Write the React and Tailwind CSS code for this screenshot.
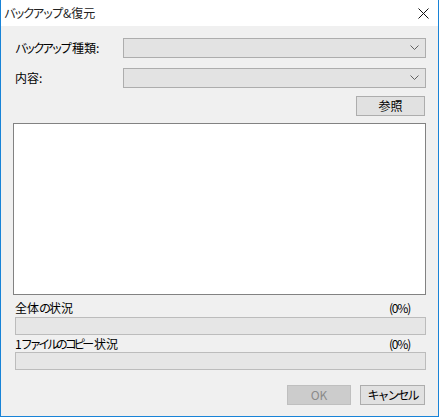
const font = { fontFamily: '"Noto Sans CJK JP", "Noto Sans", sans-serif' };

function Combo() {
    return (
        <div className="flex-1 h-[20px] bg-[#e3e3e3] border border-[#adadad] flex items-center justify-end pr-[6px]">
            <svg width="9" height="6" viewBox="0 0 9 6" className="text-[#606060]">
                <path d="M0.5 0.5 L4.5 4.5 L8.5 0.5" fill="none" stroke="currentColor" strokeWidth="1" />
            </svg>
        </div>
    );
}

function Progress() {
    return <div className="h-[18px] bg-[#e6e6e6] border border-[#bcbcbc]" />;
}

export default function App() {
    return (
        <div
            className="w-[439px] h-[417px] flex flex-col border-l border-r border-b border-[#1883d7] text-[12px] text-black"
            style={font}
        >
            {/* Title bar */}
            <div className="h-[26px] bg-white flex items-center justify-between pl-[3px] pr-[9px]">
                <span className="text-[12px] text-[#222] leading-none">
                    <span className="tracking-[-2.5px]">バックアップ</span>
                    <span className="pl-[2px]">&amp;復元</span>
                </span>
                <svg width="11" height="11" viewBox="0 0 11 11">
                    <path d="M0.5 0.5 L10.5 10.5 M10.5 0.5 L0.5 10.5" stroke="#111" strokeWidth="1" />
                </svg>
            </div>

            <div className="flex-1 bg-[#f0f0f0] flex flex-col pl-[12px] pr-[12px]">
                <div className="flex items-center mt-[12px]">
                    <span className="w-[110px] pl-[2px]">
                        <span className="tracking-[-3px]">バックアップ</span>
                        <span className="pl-[3px]">種類:</span>
                    </span>
                    <Combo />
                </div>
                <div className="flex items-center mt-[10px]">
                    <span className="w-[110px] pl-[2px]">内容:</span>
                    <Combo />
                </div>
                <div className="flex justify-end mt-[8px] pr-[1px]">
                    <button className="w-[69px] h-[20px] bg-[#e1e1e1] border border-[#adadad] leading-none">
                        参照
                    </button>
                </div>

                <div className="mt-[7px] h-[172px] bg-white border border-[#828282]" />

                <div className="mt-[4px] h-[18px] flex items-center justify-between pl-[2px] pr-[16px]">
                    <span>
                        全体<span className="tracking-[-2px]">の</span>状況
                    </span>
                    <span className="tracking-[-1.2px]">(0%)</span>
                </div>
                <div className="pl-[2px]">
                    <Progress />
                </div>
                <div className="h-[17px] flex items-center justify-between pl-[2px] pr-[16px]">
                    <span>
                        <span className="tracking-[-1px]">1</span>
                        <span className="tracking-[-3.2px]">ファイルのコピー</span>
                        <span className="pl-[3px]">状況</span>
                    </span>
                    <span className="tracking-[-1.2px]">(0%)</span>
                </div>
                <div className="pl-[2px]">
                    <Progress />
                </div>

                <div className="flex justify-end gap-[9px] mt-[15px] pr-[1px]">
                    <button className="w-[64px] h-[20px] bg-[#cccccc] border border-[#bfbfbf] text-[#8a8a8a] leading-none">
                        OK
                    </button>
                    <button className="w-[65px] h-[20px] bg-[#e1e1e1] border border-[#adadad] leading-none tracking-[-2px]">
                        キャンセル
                    </button>
                </div>
            </div>
        </div>
    );
}
